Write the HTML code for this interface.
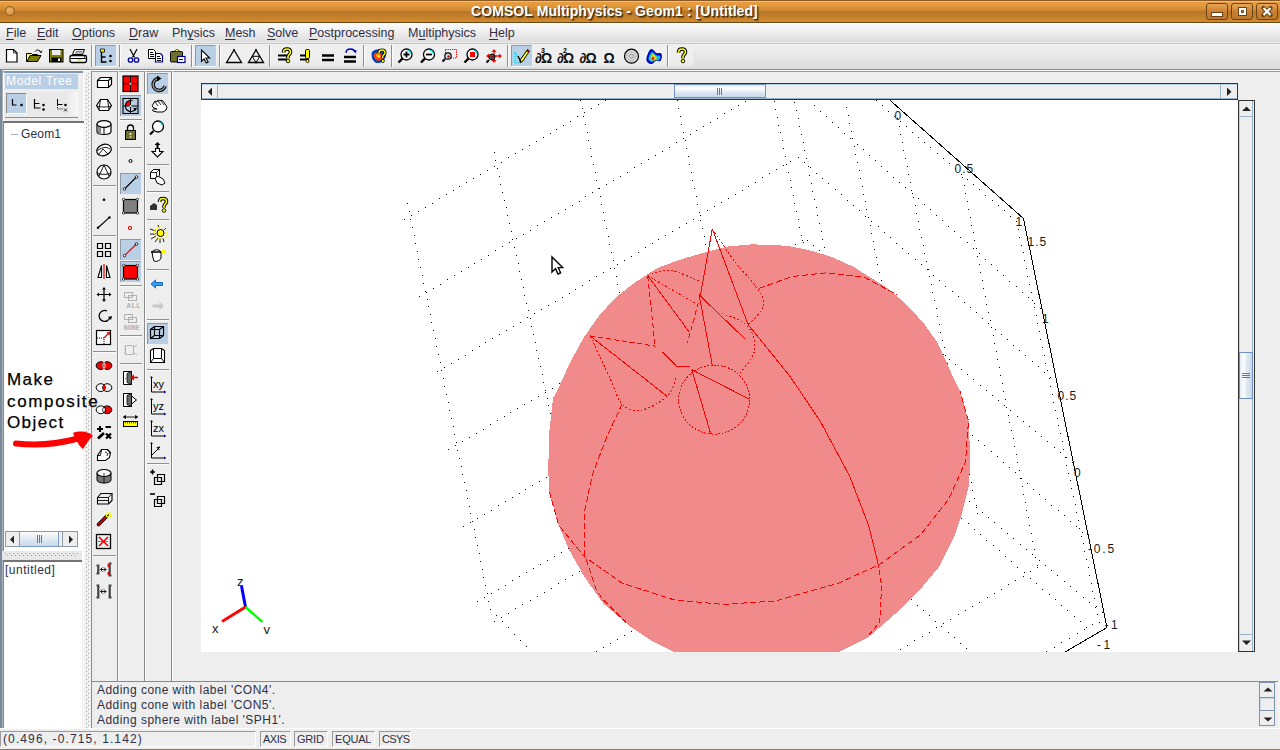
<!DOCTYPE html>
<html><head><meta charset="utf-8">
<style>
*{margin:0;padding:0;box-sizing:border-box}
html,body{width:1280px;height:750px;overflow:hidden;background:#eeeeee;font-family:"Liberation Sans",sans-serif;color:#222}
.a{position:absolute}
#title{left:0;top:0;width:1280px;height:23px;background:linear-gradient(#8a5a22 0,#8a5a22 1px,#f6c27e 1px,#f0b468 2px,#e89c3c 2px,#e49a3c 5px,#d48c34 9px,#c88430 11px,#b77728 11px,#bc7a2a 14px,#c8822a 18px,#d48a2c 22px,#6a4818 22px,#6a4818 23px)}
#title .t{left:471px;top:3px;font:bold 14px "Liberation Sans",sans-serif;color:#fff;letter-spacing:0.08px;text-shadow:1px 1px 0 #4a3010, 1.5px 1.5px 1px rgba(60,40,10,.6);white-space:nowrap}
.wb{top:3px;width:22px;height:17px;border:1px solid #6a4418;border-radius:3px;background:linear-gradient(#eaa756,#c98031 50%,#bd772a)}
#menu{left:0;top:23px;width:1280px;height:20px;background:linear-gradient(#fdfdfd,#f4f4f4 30%,#e6e6e6 70%,#dcdcdc 95%,#ececec 95%)}
#menu span{position:absolute;top:3px;font-size:12.5px;color:#2e2e46;white-space:nowrap}
#menu u{text-decoration:underline;text-underline-offset:1.5px;text-decoration-thickness:1px}
#tb{left:0;top:43px;width:1280px;height:27px;background:linear-gradient(#f0f0f0,#e9e9e9 40%,#dcdcdc);border-bottom:1px solid #8a8a8a}
.sep{position:absolute;width:2px;border-left:1px solid #9a9a9a;border-right:1px solid #fff}
.sel{position:absolute;background:#b8cfe5;border-left:1px solid #8b99a6;border-top:1px solid #8b99a6;border-right:1px solid #fff;border-bottom:1px solid #fff}
svg{position:absolute;overflow:visible}
</style></head><body>

<!-- TITLE BAR -->
<div id="title" class="a">
  <div class="a" style="left:5px;top:6px;width:10px;height:10px;border-radius:50%;border:1px solid #8a5a22;background:radial-gradient(circle at 40% 35%,#f2b36a,#d08530)"></div>
  <div class="a t">COMSOL Multiphysics - Geom1 : [Untitled]</div>
  <div class="a wb" style="left:1206px"><div class="a" style="left:5px;top:9px;width:10px;height:3px;background:#fff;outline:1px solid #6a4418"></div></div>
  <div class="a wb" style="left:1231px"><div class="a" style="left:6.5px;top:3.5px;width:7px;height:7px;border:2px solid #fff;outline:1px solid #6a4418;background:#8a5a22"></div></div>
  <div class="a wb" style="left:1256px"><svg width="22" height="17" style="left:-1px;top:-1px"><path d="M7.5 5 L14.5 12 M14.5 5 L7.5 12" stroke="#6a4418" stroke-width="4.2" stroke-linecap="round"/><path d="M7.5 5 L14.5 12 M14.5 5 L7.5 12" stroke="#fff" stroke-width="2.2"/></svg></div>
</div>

<!-- MENU -->
<div id="menu" class="a">
  <span style="left:6px"><u>F</u>ile</span>
  <span style="left:37px"><u>E</u>dit</span>
  <span style="left:72px"><u>O</u>ptions</span>
  <span style="left:129px"><u>D</u>raw</span>
  <span style="left:172px">Ph<u>y</u>sics</span>
  <span style="left:225px"><u>M</u>esh</span>
  <span style="left:267px"><u>S</u>olve</span>
  <span style="left:309px"><u>P</u>ostprocessing</span>
  <span style="left:408px">M<u>u</u>ltiphysics</span>
  <span style="left:489px"><u>H</u>elp</span>
</div>

<!-- TOOLBAR -->
<div id="tb" class="a"></div><div class="a" style="left:0;top:44px;width:693px;height:23px;background:linear-gradient(#efefef 70%,#e6e6e6)"></div><div class="a" style="left:0;top:43px;width:1280px;height:1px;background:#c8c8c8"></div>
<!--TOOLBAR_ICONS--><svg width="1280" height="72" style="left:0;top:0"><line x1="91.5" y1="45" x2="91.5" y2="67" stroke="#8f8f8f" stroke-width="1"/><line x1="92.5" y1="45" x2="92.5" y2="67" stroke="#fafafa" stroke-width="1"/>
<line x1="119.5" y1="45" x2="119.5" y2="67" stroke="#8f8f8f" stroke-width="1"/><line x1="120.5" y1="45" x2="120.5" y2="67" stroke="#fafafa" stroke-width="1"/>
<line x1="191.5" y1="45" x2="191.5" y2="67" stroke="#8f8f8f" stroke-width="1"/><line x1="192.5" y1="45" x2="192.5" y2="67" stroke="#fafafa" stroke-width="1"/>
<line x1="219.5" y1="45" x2="219.5" y2="67" stroke="#8f8f8f" stroke-width="1"/><line x1="220.5" y1="45" x2="220.5" y2="67" stroke="#fafafa" stroke-width="1"/>
<line x1="269.5" y1="45" x2="269.5" y2="67" stroke="#8f8f8f" stroke-width="1"/><line x1="270.5" y1="45" x2="270.5" y2="67" stroke="#fafafa" stroke-width="1"/>
<line x1="363.5" y1="45" x2="363.5" y2="67" stroke="#8f8f8f" stroke-width="1"/><line x1="364.5" y1="45" x2="364.5" y2="67" stroke="#fafafa" stroke-width="1"/>
<line x1="391.5" y1="45" x2="391.5" y2="67" stroke="#8f8f8f" stroke-width="1"/><line x1="392.5" y1="45" x2="392.5" y2="67" stroke="#fafafa" stroke-width="1"/>
<line x1="507.5" y1="45" x2="507.5" y2="67" stroke="#8f8f8f" stroke-width="1"/><line x1="508.5" y1="45" x2="508.5" y2="67" stroke="#fafafa" stroke-width="1"/>
<line x1="667.5" y1="45" x2="667.5" y2="67" stroke="#8f8f8f" stroke-width="1"/><line x1="668.5" y1="45" x2="668.5" y2="67" stroke="#fafafa" stroke-width="1"/>
<rect x="95" y="45.5" width="21" height="21" fill="#b8cfe5"/><path d="M95.5 66.5V45.5H115.5" stroke="#8e98a2" fill="none"/><path d="M95 66.5H116" stroke="#f4f7fa" fill="none"/>
<rect x="195" y="45.5" width="21" height="21" fill="#b8cfe5"/><path d="M195.5 66.5V45.5H215.5" stroke="#8e98a2" fill="none"/><path d="M195 66.5H216" stroke="#f4f7fa" fill="none"/>
<rect x="511" y="45.5" width="21" height="21" fill="#b8cfe5"/><path d="M511.5 66.5V45.5H531.5" stroke="#8e98a2" fill="none"/><path d="M511 66.5H532" stroke="#f4f7fa" fill="none"/>
<path d="M6.5 49.5h7l3.5 3.5v9h-10.5z" fill="#fff" stroke="#000" stroke-width="1.2"/><path d="M13.5 49.5v3.5h3.5" fill="none" stroke="#000" stroke-width=".8"/>
<path d="M26.5 53.5h5l1 1h5v7h-11z" fill="#ffff80" stroke="#000"/><path d="M27 61.5l3-6h11l-3.5 6z" fill="#808000" stroke="#000"/><path d="M35 51.5c1.5-2 4.5-2 5.5 0.5" fill="none" stroke="#000"/><path d="M39.5 50.5l1.5 2.5 1-2.5" fill="none" stroke="#000" stroke-width=".8"/>
<rect x="49.5" y="49.5" width="13.5" height="12.5" fill="#808000" stroke="#000"/><rect x="52" y="50" width="8.5" height="5" fill="#ececec"/><rect x="51.5" y="57.5" width="10" height="4.5" fill="#000"/><rect x="58" y="58.5" width="2" height="2.5" fill="#fff"/>
<path d="M74.5 49.5h10l-2 5h-10z" fill="#fff" stroke="#000" stroke-width="1"/><path d="M75.5 51.3h7M75 53h7" stroke="#000" stroke-width=".6"/><path d="M72 55.5h13c1 0 1.5 .8 1.5 1.8v3.2c0 1-.8 2-2 2h-12.5c-1.2 0-2-1-2-2v-3.2c0-1 .8-1.8 2-1.8z" fill="#fff" stroke="#000" stroke-width="1.3"/><path d="M71 58.5h15" stroke="#000" stroke-width="1"/><path d="M77.5 59.8h4" stroke="#e8d800" stroke-width="1.4"/><circle cx="84.5" cy="57" r=".7" fill="#000"/>
<path d="M101.5 51v11h5M101.5 57h4" stroke="#000" stroke-width="1.4" fill="none"/><path d="M100.5 49h4v3h-4z" fill="#ffff00" stroke="#000" stroke-width=".8"/><circle cx="110.5" cy="56" r="1.3"/><circle cx="110.5" cy="61" r="1.3"/>
<path d="M130 49l4.5 8.5M137 49l-4.5 8.5" stroke="#000" stroke-width="1.2"/><circle cx="130.5" cy="60" r="2.2" fill="none" stroke="#0000a0" stroke-width="1.3"/><circle cx="136.5" cy="60" r="2.2" fill="none" stroke="#0000a0" stroke-width="1.3"/>
<path d="M148.5 49.5h5l2 2v7h-7z" fill="#fff" stroke="#000"/><path d="M150 52.5h3M150 54.5h4M150 56.5h4" stroke="#000" stroke-width="1" shape-rendering="crispEdges"/><path d="M155.5 53.5h5l2 2v6.5h-7z" fill="#fff" stroke="#00008a" stroke-width="1.2"/><path d="M157 56.5h3M157 58.5h4M157 60.5h4" stroke="#000" stroke-width="1" shape-rendering="crispEdges"/>
<rect x="170.5" y="51.5" width="12" height="10.5" rx="1" fill="#6f6f30" stroke="#000"/><path d="M174 51.5l2.5-2h1l2.5 2z" fill="#ffff30" stroke="#000" stroke-width=".7"/><rect x="177.5" y="56.5" width="7.5" height="6" fill="#fff" stroke="#00008a" stroke-width="1.2"/><path d="M179 59.5h3.5" stroke="#00008a" stroke-width="1" shape-rendering="crispEdges"/>
<path d="M201.5 50v11.5l2.6-2.6 2.2 4 1.8-0.9-2.1-4h3.7z" fill="#fff" stroke="#000" stroke-width="1.1"/>
<path d="M234 50l-7.5 12.5h15z" fill="none" stroke="#000" stroke-width="1.3"/><circle cx="234" cy="50" r="1"/>
<path d="M256 50l-7.5 12.5h15z" fill="none" stroke="#000" stroke-width="1.3"/><path d="M252.2 56.3h7.6l-3.8 6.2z" fill="none" stroke="#000" stroke-width="1"/><circle cx="256" cy="50" r="1"/><circle cx="256" cy="62.5" r="1"/>
<path d="M278 55.5h9M278 59.5h9" stroke="#000" stroke-width="2.2"/><path d="M283.5 52.5c0-2.5 1.5-3.5 3.5-3.5s3.5 1 3.5 3.2c0 2-2.5 2.5-2.5 4.5v1.5" fill="none" stroke="#000" stroke-width="3.6"/><path d="M283.5 52.5c0-2.5 1.5-3.5 3.5-3.5s3.5 1 3.5 3.2c0 2-2.5 2.5-2.5 4.5v1.5" fill="none" stroke="#ffff00" stroke-width="1.6"/><circle cx="288" cy="61" r="1.8" fill="#ffff00" stroke="#000" stroke-width=".9"/>
<path d="M300 55.5h9M300 59.5h9" stroke="#000" stroke-width="2.2"/><rect x="305.5" y="49.5" width="4" height="9" rx="1.2" fill="#ffff00" stroke="#000"/><circle cx="307.5" cy="61" r="1.6" fill="#ffff00" stroke="#000" stroke-width=".8"/>
<path d="M322 55.5h12M322 60h12" stroke="#000" stroke-width="2.4"/>
<path d="M344 57h12M344 61.5h12" stroke="#000" stroke-width="2.4"/><path d="M346 53c0-3 2-4 4.5-4s4 1.5 4.5 3" fill="none" stroke="#0000c0" stroke-width="1.3"/><path d="M353 50.5l3 3 0.5-3.5z" fill="#0000c0"/>
<path d="M372 52c2-3 9-4 12-1s2 6 0 9-5 3-7 3-3-2-4-3-2-5-1-8z" fill="#0040c0"/><path d="M374 54c2-2 6-2 8 0s1 5-1 6-4 1-5 0-3-4-2-6z" fill="#ff4000"/><path d="M376 55c1-1 3-1 4 0s0 3-1 3-3-2-3-3z" fill="#ffe000"/><path d="M379 53c0-2 1.2-3 3-3s3 1 3 2.8c0 1.8-2.2 2.2-2.2 4v1.2" fill="none" stroke="#000" stroke-width="3.2"/><path d="M379 53c0-2 1.2-3 3-3s3 1 3 2.8c0 1.8-2.2 2.2-2.2 4v1.2" fill="none" stroke="#ffff00" stroke-width="1.4"/><circle cx="382.8" cy="61" r="1.6" fill="#ffff00" stroke="#000" stroke-width=".8"/>
<path d="M403.0 58.0l-4.5 4.5" stroke="#000" stroke-width="2.4"/><circle cx="406.5" cy="54.5" r="5.5" fill="#fff" stroke="#000" stroke-width="1.3"/><path d="M407.5 50.2a4.5 4.5 0 0 1 3.3 3.3" stroke="#00e0f0" fill="none" stroke-width="1.2"/><path d="M403.5 54.5h6M406.5 51.5v6" stroke="#000" stroke-width="1.8"/>
<path d="M425.5 58.0l-4.5 4.5" stroke="#000" stroke-width="2.4"/><circle cx="429" cy="54.5" r="5.5" fill="#fff" stroke="#000" stroke-width="1.3"/><path d="M430 50.2a4.5 4.5 0 0 1 3.3 3.3" stroke="#00e0f0" fill="none" stroke-width="1.2"/><path d="M426 54.5h6" stroke="#000" stroke-width="1.8"/>
<rect x="445.5" y="49.5" width="11" height="8.5" fill="none" stroke="#e00000" stroke-width="1" stroke-dasharray="1.2 1"/>
<path d="M445 59l-2.5 2.5" stroke="#000" stroke-width="2.2"/><circle cx="448" cy="56" r="3.2" fill="#e0e0e0" stroke="#000" stroke-width="1.2"/><circle cx="448.5" cy="56.5" r="1.2" fill="#c00000"/>
<path d="M469.0 58.0l-4.5 4.5" stroke="#000" stroke-width="2.4"/><circle cx="472.5" cy="54.5" r="5.5" fill="#fff" stroke="#000" stroke-width="1.3"/><path d="M473.5 50.2a4.5 4.5 0 0 1 3.3 3.3" stroke="#00e0f0" fill="none" stroke-width="1.2"/><rect x="470" y="52" width="5" height="5" fill="#ff0000"/>
<path d="M494 49l-2.5 3h5zM494 63l-2.5-3h5zM486 56l3-2.5v5zM502 56l-3-2.5v5z" fill="#ff0000"/><path d="M494 51v10M488 56h12" stroke="#ff0000" stroke-width="1.3"/><path d="M489 60l-2.5 2.5" stroke="#000" stroke-width="2"/><circle cx="492" cy="57" r="3" fill="#555" stroke="#000"/><circle cx="492.5" cy="57" r="1.2" fill="#a00000"/>
<path d="M515 52v11h6z" fill="none" stroke="#00d0e0" stroke-width="1.2" stroke-dasharray="1 1"/><path d="M527.5 49.5l2 1.5-7 10.5-2.5 1 0.3-2.7z" fill="#ffff00" stroke="#000" stroke-width="1"/><path d="M527.5 49.5l2 1.5-1.2 1.8-2-1.5z" fill="#a00000"/><path d="M518 56l3 6" stroke="#000" stroke-width="1.2"/>
<text x="535" y="62.8" font-family="Liberation Sans" font-size="14" font-weight="bold" fill="#111" letter-spacing="-0.8">∂Ω</text><text x="541" y="52.5" font-family="Liberation Sans" font-size="7" font-weight="bold">3</text>
<text x="557" y="62.8" font-family="Liberation Sans" font-size="14" font-weight="bold" fill="#111" letter-spacing="-0.8">∂Ω</text><text x="563" y="52.5" font-family="Liberation Sans" font-size="7" font-weight="bold">2</text>
<text x="579.5" y="62.8" font-family="Liberation Sans" font-size="14" font-weight="bold" fill="#111" letter-spacing="-0.8">∂Ω</text>
<text x="603.5" y="62.8" font-family="Liberation Sans" font-size="14" font-weight="bold" fill="#111">Ω</text>
<circle cx="631.5" cy="56.2" r="7" fill="#d8d8d8" stroke="#000" stroke-width="1.2"/><circle cx="631.5" cy="56.2" r="4.5" fill="none" stroke="#888" stroke-width=".8" stroke-dasharray="1 1"/><circle cx="631.5" cy="56.2" r="2" fill="none" stroke="#888" stroke-width=".8"/>
<path d="M646.5 58c1-4 3-9 5-9 2 0 3 3 5 4s4-1 5 1 0 6-1 7-3-1-5 0-2 3-4 3-6-2-5-6z" fill="#0000c0"/><path d="M648.5 58c1-3 2-6 3.5-6s2.5 2 4 3 3 0 4 1 0 3-1 4-2 0-3.5 0-2 2-3 2-4.5-1-4-4z" fill="#00c0e0"/><path d="M650.5 58c0.5-2 1.5-4 2.5-4s2 2 3 2.5 1 2 0 3-1.5 1-2.5 1-3.5-1-3-2.5z" fill="#ffd000"/><path d="M651.5 58.5c0.5-1 1-2 1.5-2s1.5 1.5 1.5 2-1 1.5-1.5 1.5-1.5-.5-1.5-1.5z" fill="#e02000"/>
<path d="M678.5 52.5c0-2.5 1.5-3.5 3.5-3.5s3.5 1 3.5 3.2c0 2-2.5 2.5-2.5 4.5v1.5" fill="none" stroke="#000" stroke-width="3.6"/><path d="M678.5 52.5c0-2.5 1.5-3.5 3.5-3.5s3.5 1 3.5 3.2c0 2-2.5 2.5-2.5 4.5v1.5" fill="none" stroke="#ffff00" stroke-width="1.6"/><circle cx="683" cy="61" r="1.8" fill="#ffff00" stroke="#000" stroke-width=".9"/></svg><!--/TOOLBAR_ICONS-->

<!-- LEFT PANEL -->
<div class="a" style="left:0;top:70px;width:1280px;height:1px;background:#fbfbfb"></div><div class="a" style="left:91px;top:71px;width:1189px;height:1px;background:#8c9db0"></div>

<div class="a" style="left:0;top:70px;width:2px;height:659px;background:#7b8b9b"></div><div class="a" style="left:2px;top:70px;width:1px;height:659px;background:#a8b2bc"></div>
<div class="a" style="left:3px;top:71px;width:80px;height:52px;background:#eeeeee;border-top:2px solid #8096ac;border-left:1px solid #fff"></div>
<div class="a" style="left:5px;top:74px;width:73px;height:15px;background:#b8cfe5"></div>
<div class="a" style="left:6px;top:74px;font-size:12px;letter-spacing:0.65px;color:#fff;white-space:nowrap">Model Tree</div>
<div class="a" style="left:5px;top:92px;width:73px;height:23px;background:linear-gradient(90deg,#e9e9e9 85%,#f8f8f8)"></div>
<div class="sel" style="left:6px;top:93px;width:21px;height:21px;border-left-color:#888;border-top-color:#888"></div>
<div class="a" style="left:5px;top:117px;width:73px;height:1px;background:#8a8a8a"></div>
<svg width="80" height="30" style="left:0;top:90px">
 <path d="M12.5 9v6h4" stroke="#000" fill="none" stroke-width="1.2"/><circle cx="21.5" cy="15" r="1.3"/>
 <path d="M34.5 9v9h6M34.5 13.5h5" stroke="#000" fill="none" stroke-width="1.2"/><circle cx="43.5" cy="15" r="1.3"/><circle cx="43.5" cy="19.5" r="1.3"/>
 <path d="M57.5 9v5.5h5" stroke="#000" fill="none" stroke-width="1"/><path d="M57.5 15v4h5" stroke="#000" fill="none" stroke-width="1" stroke-dasharray="1 1"/><circle cx="65.5" cy="15" r="1.3"/><path d="M64 18.5l3 3M67 18.5l-3 3" stroke="#000" stroke-width=".8"/>
</svg>
<div class="a" style="left:83px;top:73px;width:1px;height:656px;background:#fbfbfb"></div><div class="a" style="left:84px;top:71px;width:7px;height:658px;background:#f2f2f2"></div><div class="a" style="left:3px;top:121px;width:81px;height:439px;background:#fff;border-left:1px solid #888;border-top:2px solid #747474"></div>
<div class="a" style="left:11px;top:134px;width:7px;height:1px;background:#9fb3c8"></div>
<div class="a" style="left:21px;top:127px;font-size:12px;color:#2e2e46;white-space:nowrap;letter-spacing:0.15px">Geom1</div>
<!-- h scrollbar -->
<div class="a" style="left:5px;top:531px;width:73px;height:16px;background:#eeeeee;border:1px solid #8c9aa8"></div>
<div class="a" style="left:19px;top:531px;width:40px;height:16px;background:linear-gradient(#fdfdfd,#dce6f0 60%,#c9d8e8);border:1px solid #7c9ccc;border-radius:1px"></div>
<div class="a" style="left:37px;top:535px;width:5px;height:8px;border-left:1px solid #5a7ab0;border-right:1px solid #5a7ab0"><div class="a" style="left:1px;top:0;width:1px;height:8px;background:#5a7ab0"></div></div>
<div class="a" style="left:62px;top:532px;width:1px;height:14px;background:#8c9aa8"></div>
<svg width="80" height="20" style="left:0;top:530px"><path d="M10 9.5l4-4v8z M73 9.5l-4-4v8z" fill="#222"/></svg>
<div class="a" style="left:2px;top:551px;width:80px;height:9px;background:#e8e8e8"></div><svg width="90" height="12" style="left:0;top:550px"><defs><pattern id="gp2" width="4" height="4" patternUnits="userSpaceOnUse" x="1" y="0"><rect x="0" y="3" width="1" height="1" fill="#8ea0b4"/><rect x="2" y="5" width="1" height="1" fill="#8ea0b4"/><rect x="2" y="1" width="1" height="1" fill="#8ea0b4"/></pattern></defs><rect x="5" y="3" width="74" height="4" fill="url(#gp2)"/></svg>
<div class="a" style="left:3px;top:560px;width:79px;height:169px;background:#fff;border-top:2px solid #747474;border-left:1px solid #888"></div>
<div class="a" style="left:5px;top:563px;font-size:12px;letter-spacing:0.5px;color:#2e2e46;white-space:nowrap">[untitled]</div>
<!-- grip -->
<svg width="8" height="660" style="left:84px;top:70px"><defs><pattern id="gp" width="4" height="4" patternUnits="userSpaceOnUse" x="0" y="1"><rect x="2" y="0" width="1" height="1" fill="#8ea0b4"/><rect x="4" y="2" width="1" height="1" fill="#8ea0b4"/><rect x="0" y="2" width="1" height="1" fill="#8ea0b4"/></pattern></defs><rect x="2" y="3" width="4" height="655" fill="url(#gp)"/></svg>
<!-- annotation -->
<div class="a" style="left:7px;top:369px;font-size:17px;line-height:21.7px;color:#000;white-space:nowrap;z-index:5;-webkit-text-stroke:0.25px #000">
<div style="letter-spacing:1.45px">Make</div><div style="letter-spacing:1.65px">composite</div><div style="letter-spacing:1.4px">Object</div></div>
<svg width="100" height="30" style="left:0;top:425px;z-index:5"><path d="M16 18.5 C30 20, 50 21, 76 14" stroke="#ff0000" stroke-width="6" fill="none" stroke-linecap="round"/><path d="M73 8 C80 5, 90 7, 93 11 C88 15, 86 20, 83 24 C80 22, 76 16, 73 8z" fill="#ff0000"/></svg>


<!-- VERTICAL TOOLBARS -->
<!--VTB--><svg width="200" height="620" style="left:0;top:0"><path d="M93 185.5H116" stroke="#8f8f8f"/><path d="M93 186.5H116" stroke="#fafafa"/>
<path d="M93 235.5H116" stroke="#8f8f8f"/><path d="M93 236.5H116" stroke="#fafafa"/>
<path d="M93 351.5H116" stroke="#8f8f8f"/><path d="M93 352.5H116" stroke="#fafafa"/>
<path d="M93 555.5H116" stroke="#8f8f8f"/><path d="M93 556.5H116" stroke="#fafafa"/>
<path d="M120 119.5H142" stroke="#8f8f8f"/><path d="M120 120.5H142" stroke="#fafafa"/>
<path d="M120 147.5H142" stroke="#8f8f8f"/><path d="M120 148.5H142" stroke="#fafafa"/>
<path d="M120 285.5H142" stroke="#8f8f8f"/><path d="M120 286.5H142" stroke="#fafafa"/>
<path d="M120 335.5H142" stroke="#8f8f8f"/><path d="M120 336.5H142" stroke="#fafafa"/>
<path d="M120 363.5H142" stroke="#8f8f8f"/><path d="M120 364.5H142" stroke="#fafafa"/>
<path d="M147 164.5H169" stroke="#8f8f8f"/><path d="M147 165.5H169" stroke="#fafafa"/>
<path d="M147 191.5H169" stroke="#8f8f8f"/><path d="M147 192.5H169" stroke="#fafafa"/>
<path d="M147 219.5H169" stroke="#8f8f8f"/><path d="M147 220.5H169" stroke="#fafafa"/>
<path d="M147 269.5H169" stroke="#8f8f8f"/><path d="M147 270.5H169" stroke="#fafafa"/>
<path d="M147 319.5H169" stroke="#8f8f8f"/><path d="M147 320.5H169" stroke="#fafafa"/>
<path d="M147 369.5H169" stroke="#8f8f8f"/><path d="M147 370.5H169" stroke="#fafafa"/>
<path d="M147 463.5H169" stroke="#8f8f8f"/><path d="M147 464.5H169" stroke="#fafafa"/>
<rect x="120" y="95" width="21" height="21" fill="#b8cfe5"/><path d="M120.5 116V95.5H141" stroke="#8e98a2" fill="none"/>
<rect x="120" y="173" width="21" height="21" fill="#b8cfe5"/><path d="M120.5 194V173.5H141" stroke="#8e98a2" fill="none"/>
<rect x="120" y="239" width="21" height="21" fill="#b8cfe5"/><path d="M120.5 260V239.5H141" stroke="#8e98a2" fill="none"/>
<rect x="120" y="261" width="21" height="21" fill="#b8cfe5"/><path d="M120.5 282V261.5H141" stroke="#8e98a2" fill="none"/>
<rect x="147" y="73" width="21" height="21" fill="#b8cfe5"/><path d="M147.5 94V73.5H168" stroke="#8e98a2" fill="none"/>
<rect x="147" y="323" width="21" height="21" fill="#b8cfe5"/><path d="M147.5 344V323.5H168" stroke="#8e98a2" fill="none"/>
<path d="M97.5 80.5l3-3h11v7l-3 3h-11z" fill="#fff" stroke="#000" stroke-width="1.2"/><path d="M97.5 80.5h11v7M108.5 80.5l3-3" stroke="#000" stroke-width="1.1" fill="none"/>
<path d="M100.5 99.5h7l4 6-3 5h-9l-3-5z" fill="#fff" stroke="#000" stroke-width="1.1"/><path d="M100.5 99.5l-1.5 10M107.5 99.5l1.5 10M96.5 105.5c2 2 13 2 15 0" stroke="#000" stroke-width=".9" fill="none"/>
<path d="M97 124v7.5c0 4 14 4 14 0v-7.5" fill="#fff" stroke="#000" stroke-width="1.2"/><path d="M97.6 125.5c0.5 1.5 2 2.3 3.5 2.6v6.3c-1.5-.3-3-1-3.5-2.5z" fill="#8a8a8a"/><ellipse cx="104" cy="124" rx="7" ry="3.3" fill="#fff" stroke="#000" stroke-width="1.2"/><path d="M104 127.3v7.8" stroke="#000" stroke-width="1" fill="none"/>
<ellipse cx="104" cy="150" rx="7.5" ry="5.5" transform="rotate(-20 104 150)" fill="#fff" stroke="#000" stroke-width="1.2"/><path d="M97 151c3-3 9-5 13-2M99 154l4-5 5 5" stroke="#000" stroke-width=".9" fill="none"/>
<circle cx="104" cy="172" r="7" fill="#fff" stroke="#000" stroke-width="1.2"/><path d="M97 172.5c3 2.5 11 2.5 14 0M104 165l-5 11M104 165l5 11" stroke="#000" stroke-width=".9" fill="none"/>
<circle cx="104" cy="199.8" r="1.3" fill="#000"/>
<path d="M98 227.7L109.5 217.4" stroke="#000" stroke-width="1.2"/><circle cx="98" cy="227.7" r="1.2"/><circle cx="109.5" cy="217.4" r="1.2"/>
<path d="M97.5 243.5h5v5h-5zM105.5 243.5h5v5h-5zM97.5 251.5h5v5h-5zM105.5 251.5h5v5h-5z" stroke="#000" stroke-width="1.2" fill="none"/>
<path d="M98 277.5l3.5-12v12zM110 277.5l-3.5-12v12z" fill="#fff" stroke="#000" stroke-width="1.1"/><path d="M104 264v15" stroke="#e00000" stroke-width="1.2"/>
<path d="M104 288v13M97.5 294.5h13" stroke="#000" stroke-width="1.2"/><path d="M104 287l-2 2.5h4zM104 302l-2-2.5h4zM96.5 294.5l2.5-2v4zM111.5 294.5l-2.5-2v4z" fill="#000"/>
<path d="M107 311a5.5 5.5 0 1 0 3 6" stroke="#000" stroke-width="1.3" fill="none"/><path d="M108 317l3 3 1-4z" fill="#000"/>
<rect x="96.5" y="330.5" width="14" height="14" fill="#fff" stroke="#000" stroke-width="1.2"/><path d="M97 338h7v6.5" stroke="#000" stroke-dasharray="1 1" fill="none"/><path d="M104 338l5.5-5.5" stroke="#e00000" stroke-width="1.2"/><path d="M110 332l-3.5 0.3 3.2 3.2z" fill="#e00000"/>
<ellipse cx="100.8" cy="365.6" rx="4.6" ry="3.9" fill="#f00000" stroke="#000" stroke-width="1"/><ellipse cx="107.2" cy="365.6" rx="4.6" ry="3.9" fill="#f00000" stroke="#000" stroke-width="1"/><path d="M104 362.5c-1.6 2-1.6 4.2 0 6.2c1.6-2 1.6-4.2 0-6.2z" fill="#f00000" stroke="#fff" stroke-width=".9"/>
<ellipse cx="100.8" cy="387.6" rx="4.6" ry="3.9" fill="#fff" stroke="#000" stroke-width="1"/><ellipse cx="107.2" cy="387.6" rx="4.6" ry="3.9" fill="none" stroke="#000" stroke-width="1"/><path d="M104 384.3c-1.8 2-1.8 4.6 0 6.6c1.8-2 1.8-4.6 0-6.6z" fill="#f00000"/>
<ellipse cx="107.2" cy="409.8" rx="4.6" ry="3.9" fill="#f00000" stroke="#000" stroke-width="1"/><ellipse cx="100.8" cy="409.8" rx="4.6" ry="3.9" fill="#fff" stroke="#000" stroke-width="1"/><path d="M104 406.5c-1.8 2-1.8 4.6 0 6.6" fill="none" stroke="#000" stroke-width=".8"/>
<path d="M97 429h6M100 426v6M105.5 427h5.5" stroke="#000" stroke-width="2"/><path d="M98 438.5l6-5.5" stroke="#000" stroke-width="2.8"/><path d="M106 433.5l5 5M111 433.5l-5 5" stroke="#000" stroke-width="2.2"/>
<path d="M97.5 455.5l4-6h6l3 3-1 5-4 3h-8z" fill="#fff" stroke="#000" stroke-width="1.1"/><path d="M101.5 449.5l-1 6h-3M105 452c2 0 3 2 2 4M107 450c2 0 3 2 2 4" stroke="#000" stroke-width=".9" fill="none"/>
<path d="M97 473v7c0 4 14 4 14 0v-7" fill="#777" stroke="#000" stroke-width="1"/><ellipse cx="104" cy="473" rx="7" ry="3.5" fill="#fff" stroke="#000" stroke-width="1.1"/><path d="M104 473v10.5" stroke="#000" stroke-width=".8"/>
<path d="M97.5 497.5l3.5-4h11v7l-3.5 3.5h-11z" fill="none" stroke="#000" stroke-width="1.1"/><path d="M97.5 497.5h11v6.5M108.5 497.5l3.5-4M97.5 500.5h11" stroke="#000" stroke-width=".9" fill="none"/>
<path d="M98.5 524.5l8-8" stroke="#000" stroke-width="3.6" stroke-linecap="round"/><path d="M98.5 524.5l8-8" stroke="#d00000" stroke-width="2" stroke-linecap="round"/><circle cx="108.5" cy="515" r="2.2" fill="none" stroke="#ffff00" stroke-width="1.2"/><circle cx="108.5" cy="515" r=".7" fill="#000"/>
<rect x="96.5" y="534.5" width="14" height="14" fill="#eee" stroke="#000" stroke-width="1.3"/><path d="M98.5 541.5h10" stroke="#000" stroke-dasharray="1 1"/><path d="M99 537l9 9M108 537l-9 9" stroke="#e00000" stroke-width="1.5"/>
<path d="M96.5 565.5h1.8v8h-1.8M111.5 563.5h-1.8v12h1.8" stroke="#444" stroke-width="2.2" fill="none"/><path d="M100.5 569.5h5.5M100.5 569.5l2-2M100.5 569.5l2 2M106 569.5l-2-2M106 569.5l-2 2" stroke="#000" stroke-width=".9" fill="none"/><circle cx="108.3" cy="565.5" r="1" fill="#f00"/><circle cx="108.3" cy="573.5" r="1" fill="#f00"/><path d="M108.3 563.5v4M108.3 571.5v4" stroke="#f00" stroke-width=".8"/>
<path d="M96.5 585.5h1.8v12h-1.8M111.5 585.5h-1.8v12h1.8" stroke="#444" stroke-width="2.2" fill="none"/><path d="M100.5 591.5h5.5M100.5 591.5l2-2M100.5 591.5l2 2M106 591.5l-2-2M106 591.5l-2 2" stroke="#000" stroke-width=".9" fill="none"/>
<rect x="123" y="76" width="15" height="15.5" fill="#ff0000" stroke="#000" stroke-width="1.2"/><path d="M130.5 76v15.5M123 83.7h15" stroke="#000" stroke-width="1"/><circle cx="130.5" cy="83.7" r="1" fill="#fff"/>
<rect x="123" y="98.5" width="15" height="15" fill="#b8cfe5" stroke="#000" stroke-width="1.1"/><path d="M130.5 106v-5.5a5.5 5.5 0 0 0-5.5 5.5z" fill="#f00"/><path d="M123.5 99h7v7h-7z" fill="none"/><path d="M130.5 98.5v15M123 106h15" stroke="#000" stroke-width="1"/><path d="M132.5 100.8a5.5 5.5 0 1 0 3.3 7.5" stroke="#000" fill="none" stroke-width="1.1"/><path d="M137 107.5l-1.2 3.5-2.8-2.5z" fill="#000"/><circle cx="130.5" cy="106" r="1" fill="#fff"/>
<path d="M127.5 131v-3a3 3 0 0 1 6 0v3" stroke="#000" stroke-width="1.3" fill="none"/><rect x="125.5" y="130.5" width="10" height="9" fill="#6f6f30" stroke="#000"/><circle cx="130.5" cy="134" r="1" fill="#fff"/><path d="M129.5 137h2" stroke="#fff"/>
<circle cx="130.5" cy="161" r="1.5" fill="none" stroke="#000" stroke-width="1"/>
<path d="M124.5 189L136.5 177" stroke="#000" stroke-width="1.1"/><circle cx="124.5" cy="189" r="1.3" fill="#fff" stroke="#000" stroke-width=".8"/><circle cx="136.5" cy="177" r="1.3" fill="#fff" stroke="#000" stroke-width=".8"/>
<rect x="123.5" y="199.5" width="14" height="13.5" fill="#808080" stroke="#000" stroke-width="1.2"/><circle cx="123.5" cy="199.5" r="1.2" fill="#fff" stroke="#000" stroke-width=".7"/><circle cx="137.5" cy="199.5" r="1.2" fill="#fff" stroke="#000" stroke-width=".7"/><circle cx="123.5" cy="213" r="1.2" fill="#fff" stroke="#000" stroke-width=".7"/><circle cx="137.5" cy="213" r="1.2" fill="#fff" stroke="#000" stroke-width=".7"/>
<circle cx="130" cy="228.1" r="1.6" fill="none" stroke="#e00000" stroke-width="1.1"/>
<path d="M124.5 255.6L136.5 244" stroke="#e00000" stroke-width="1.1"/><circle cx="124.5" cy="255.6" r="1.3" fill="#fff" stroke="#000" stroke-width=".8"/><circle cx="136.5" cy="244" r="1.3" fill="#fff" stroke="#000" stroke-width=".8"/>
<rect x="123.5" y="265.5" width="14" height="13.5" fill="#ff0000" stroke="#000" stroke-width="1.2"/><circle cx="123.5" cy="265.5" r="1.2" fill="#fff" stroke="#000" stroke-width=".7"/><circle cx="137.5" cy="265.5" r="1.2" fill="#fff" stroke="#000" stroke-width=".7"/><circle cx="123.5" cy="279" r="1.2" fill="#fff" stroke="#000" stroke-width=".7"/><circle cx="137.5" cy="279" r="1.2" fill="#fff" stroke="#000" stroke-width=".7"/>
<path d="M124.5 292.5h8v5h-8zM128.5 295.5h8v5h-8z" stroke="#b0b0b0" fill="none" shape-rendering="crispEdges"/><text x="126.5" y="307.5" font-size="7.5" font-family="Liberation Mono" font-weight="bold" fill="#b4b4b4" letter-spacing="0.3">ALL</text>
<path d="M124.5 314.5h8v5h-8zM128.5 317.5h8v5h-8z" stroke="#b0b0b0" fill="none" shape-rendering="crispEdges"/><text x="123.5" y="329.5" font-size="7" font-family="Liberation Mono" font-weight="bold" fill="#b4b4b4" letter-spacing="-0.2">NONE</text>
<path d="M125.5 345.5h8v9h-8z" stroke="#b4b4b4" fill="none"/><path d="M134 347l3-2M134 353l3 2" stroke="#b4b4b4"/><path d="M124 347h1.5M124 350h1.5M124 353h1.5" stroke="#b4b4b4"/>
<path d="M123.5 371.5h8v13h-8z" fill="#fff" stroke="#000"/><path d="M127 373.5l4.5-2v13l-4.5-2z" fill="#666" stroke="#000" stroke-width=".8"/><path d="M125 379l1 -1" stroke="#000" stroke-width=".6"/><path d="M131.5 377.5h6.5" stroke="#e00000" stroke-width="1.6"/><path d="M130.5 377.5l3.5-3.2v6.4z" fill="#e00000"/>
<path d="M123.5 393.5h8v13h-8z" fill="#fff" stroke="#000"/><path d="M127 395.5l4.5-2v13l-4.5-2z" fill="#666" stroke="#000" stroke-width=".8"/><path d="M131.5 396l5 4-5 4z" fill="#fff" stroke="#000"/>
<path d="M123.5 417h14M123.5 417l2-1.5v3zM137.5 417l-2-1.5v3z" stroke="#000" stroke-width=".9" fill="#000"/><rect x="123.5" y="421.5" width="14" height="5" fill="#ffff00" stroke="#000"/><path d="M125.5 422v1.5M127.5 422v1.5M129.5 422v1.5M131.5 422v1.5M133.5 422v1.5M135.5 422v1.5" stroke="#000" stroke-width=".6"/>
<path d="M158.5 78.5a6 6 0 1 0 6.5 7.5" stroke="#000" stroke-width="3.6" fill="none"/><path d="M158.5 78.5a6 6 0 1 0 6.5 7.5" stroke="#9a9a9a" stroke-width="1.6" fill="none"/><path d="M157 75.5l4.5 3-4.5 3z" fill="#000"/>
<path d="M152 106l3-5 2 1 1-2 2 1 1-1 2 1 4 6-1 3-3 2h-6l-4-1c-1-1 0-2 1-2h3l-3-1z" fill="#fff" stroke="#000" stroke-width="1"/><path d="M155 102l3 4M158 101l3 4M161 101l3 4" stroke="#000" stroke-width=".8"/>
<path d="M153.5 131l-3.5 3.5" stroke="#000" stroke-width="2.2"/><circle cx="158" cy="126.5" r="5.5" fill="#fff" stroke="#000" stroke-width="1.3"/><path d="M159 122a4.5 4.5 0 0 1 3.3 3.3" stroke="#00e0f0" fill="none" stroke-width="1.2"/>
<path d="M157.5 142l-3 3h2v3h2v-3h2z" fill="#000"/><path d="M155.5 148.5v3h-3.5l5.5 5.5 5.5-5.5h-3.5v-3z" fill="#fff" stroke="#000" stroke-width="1.1"/>
<path d="M150.5 172.5l3-3h6v6l-3 3h-6z" fill="#fff" stroke="#000"/><path d="M150.5 172.5h6v6M156.5 172.5l3-3" stroke="#000" fill="none" stroke-width=".8"/><path d="M155 178l3-2 5 3 2 4-3 2-5-2z" fill="#fff" stroke="#000"/>
<path d="M150 206l4-3 3 2v5h-7z" fill="#333"/><path d="M159.5 202c0-2.5 1.5-3.5 3.5-3.5s3.5 1 3.5 3.2c0 2-2.5 2.5-2.5 4.5v1.5" fill="none" stroke="#000" stroke-width="3.6"/><path d="M159.5 202c0-2.5 1.5-3.5 3.5-3.5s3.5 1 3.5 3.2c0 2-2.5 2.5-2.5 4.5v1.5" fill="none" stroke="#ffff00" stroke-width="1.6"/><circle cx="164" cy="210.5" r="1.8" fill="#ffff00" stroke="#000" stroke-width=".9"/>
<circle cx="160.5" cy="233" r="3.5" fill="#ffff00" stroke="#000"/><path d="M150 229l6 2M150 234h6M151 239l5-3M155 242l3-4M160 243v-5M164 242l-1-4M166 228l-2 2M158 225l1 3" stroke="#000" stroke-width=".9"/><circle cx="160.5" cy="233" r="6" fill="none" stroke="#ffff00" stroke-width="1.3" stroke-dasharray="1.5 1"/>
<path d="M152 252c2-3 7-3 9 0v6c-1 3-5 4-7 3l-1-3z" fill="#fff" stroke="#000"/><path d="M151 252h10" stroke="#000" stroke-width="1.5"/><path d="M162 250l4-1v5l-4-1z" fill="#ffff00"/>
<path d="M151 284l4.5-4v2.5h7v3h-7v2.5z" fill="#30a0ff" stroke="#0050a0" stroke-width=".8"/>
<path d="M164 306l-4.5-4v2.5h-7v3h7v2.5z" fill="#c8c8c8"/>
<path d="M150.5 329.5h9v9h-9zM154.5 326.5h9v9h-9zM150.5 329.5l4-3M159.5 329.5l4-3M150.5 338.5l4-3M159.5 338.5l4-3" stroke="#000" stroke-width="1.2" fill="none"/>
<path d="M150.5 350.5l3-2h8l3 2v12h-14z" fill="#fff" stroke="#000" stroke-width="1.1"/><path d="M153.5 348.5v10h8v-10M150.5 362.5l3-4M164.5 362.5l-3-4" stroke="#000" fill="none" stroke-width="1"/>
<path d="M151.5 377v15h14" stroke="#000" fill="none" stroke-width="1"/><path d="M151.5 376l-1.5 2h3zM166 392l-2-1.5v3z" fill="#00008a"/>
<text x="153" y="388" font-size="11" font-family="Liberation Sans" fill="#000">xy</text>
<path d="M151.5 399v15h14" stroke="#000" fill="none" stroke-width="1"/><path d="M151.5 398l-1.5 2h3zM166 414l-2-1.5v3z" fill="#00008a"/>
<text x="153" y="410" font-size="11" font-family="Liberation Sans" fill="#000">yz</text>
<path d="M151.5 421v15h14" stroke="#000" fill="none" stroke-width="1"/><path d="M151.5 420l-1.5 2h3zM166 436l-2-1.5v3z" fill="#00008a"/>
<text x="153" y="432" font-size="11" font-family="Liberation Sans" fill="#000">zx</text>
<path d="M151.5 443v15h14" stroke="#000" fill="none" stroke-width="1"/><path d="M151.5 442l-1.5 2h3zM166 458l-2-1.5v3z" fill="#00008a"/>
<path d="M152 455l8-8M160 447l-3 .5 2.5 2.5" stroke="#000" fill="none"/>
<path d="M154.5 477.5h7v7h-7zM157.5 474.5h7v7h-7z" stroke="#000" fill="none" stroke-width="1.2"/><path d="M150 472h5M152.5 469.5v5" stroke="#000" stroke-width="1.6"/>
<path d="M154.5 499.5h7v7h-7zM157.5 496.5h7v7h-7z" stroke="#000" fill="none" stroke-width="1.2"/><path d="M150 494h5" stroke="#000" stroke-width="1.6"/></svg><!--/VTB-->

<!-- CANVAS -->

<div class="a" style="left:91px;top:71px;width:1px;height:610px;background:#7890a8"></div>
<div class="a" style="left:117px;top:71px;width:1px;height:610px;background:#8a8a8a"></div>
<div class="a" style="left:118px;top:71px;width:1px;height:610px;background:#fff"></div>
<div class="a" style="left:144px;top:71px;width:1px;height:610px;background:#8a8a8a"></div>
<div class="a" style="left:145px;top:71px;width:1px;height:610px;background:#fff"></div>
<div class="a" style="left:171px;top:71px;width:1px;height:610px;background:#8a8a8a"></div>
<div class="a" style="left:172px;top:71px;width:1px;height:610px;background:#fff"></div>
<!-- h scrollbar -->
<div class="a" style="left:201px;top:83px;width:1037px;height:17px;background:#eeeeee;border:1px solid #333"></div>
<div class="a" style="left:202px;top:84px;width:1035px;height:1px;background:#b8cfe5"></div>
<div class="a" style="left:202px;top:98px;width:1035px;height:1px;background:#9ab4cc"></div>
<div class="a" style="left:217px;top:84px;width:1px;height:15px;background:#9ab4cc"></div>
<div class="a" style="left:1220px;top:84px;width:1px;height:15px;background:#9ab4cc"></div>
<div class="a" style="left:674px;top:84px;width:92px;height:14px;background:linear-gradient(#e4ecf5,#fdfdfe 30%,#dfe8f2 60%,#c8d8ea);border:1px solid #6f91c8"></div>
<div class="a" style="left:717px;top:88px;width:5px;height:7px;border-left:1px solid #5a7ab0;border-right:1px solid #5a7ab0"><div class="a" style="left:1px;top:0;width:1px;height:7px;background:#5a7ab0"></div></div>
<svg width="1100" height="20" style="left:190px;top:82px"><path d="M17.8 9.8l4.2-4.2v8.4z M1041.5 9.8l-4.5-4.3v8.6z" fill="#222"/></svg>
<!-- v scrollbar -->
<div class="a" style="left:1238px;top:100px;width:17px;height:552px;background:#eeeeee;border:1px solid #333"></div>
<div class="a" style="left:1239px;top:101px;width:1px;height:550px;background:#b8cfe5"></div>
<div class="a" style="left:1252px;top:101px;width:1px;height:550px;background:#9ab4cc"></div>
<div class="a" style="left:1240px;top:116px;width:12px;height:1px;background:#9ab4cc"></div>
<div class="a" style="left:1240px;top:634px;width:12px;height:1px;background:#9ab4cc"></div>
<div class="a" style="left:1239px;top:352px;width:14px;height:47px;background:linear-gradient(90deg,#e4ecf5,#fdfdfe 30%,#dfe8f2 60%,#c8d8ea);border:1px solid #6f91c8"></div>
<div class="a" style="left:1242px;top:373px;width:8px;height:5px;border-top:1px solid #5a7ab0;border-bottom:1px solid #5a7ab0"><div class="a" style="left:0;top:1px;width:8px;height:1px;background:#5a7ab0"></div></div>
<svg width="20" height="560" style="left:1238px;top:100px"><path d="M8.5 6.5l-4.5 4.5h9z M8.5 545l-4.5-4.5h9z" fill="#222"/></svg>
<!-- canvas white -->
<div class="a" style="left:201px;top:100px;width:1037px;height:552px;background:#fff;overflow:hidden">
<!--DRAW--><svg width="1280" height="750" style="left:-201px;top:-100px">
<path d="M404 219h1v1h-1zM407 203h1v1h-1zM409 211h1v1h-1zM410 219h1v1h-1zM411 215h1v1h-1zM412 227h1v1h-1zM414 235h1v1h-1zM415 243h1v1h-1zM417 251h1v1h-1zM418 211h1v1h-1zM418 259h1v1h-1zM419 296h1v1h-1zM420 267h1v1h-1zM422 275h1v1h-1zM423 283h1v1h-1zM425 207h1v1h-1zM425 291h1v1h-1zM426 292h1v1h-1zM427 299h1v1h-1zM428 306h1v1h-1zM430 314h1v1h-1zM431 322h1v1h-1zM432 203h1v1h-1zM433 288h1v1h-1zM433 330h1v1h-1zM435 338h1v1h-1zM436 346h1v1h-1zM437 371h1v1h-1zM438 354h1v1h-1zM439 198h1v1h-1zM440 284h1v1h-1zM440 362h1v1h-1zM441 370h1v1h-1zM443 378h1v1h-1zM444 367h1v1h-1zM444 386h1v1h-1zM446 194h1v1h-1zM446 394h1v1h-1zM447 279h1v1h-1zM448 402h1v1h-1zM448 449h1v1h-1zM449 410h1v1h-1zM451 363h1v1h-1zM451 418h1v1h-1zM453 190h1v1h-1zM453 426h1v1h-1zM454 275h1v1h-1zM454 434h1v1h-1zM455 445h1v1h-1zM456 442h1v1h-1zM457 450h1v1h-1zM458 359h1v1h-1zM459 186h1v1h-1zM459 458h1v1h-1zM461 271h1v1h-1zM461 466h1v1h-1zM462 441h1v1h-1zM462 474h1v1h-1zM463 526h1v1h-1zM464 482h1v1h-1zM465 355h1v1h-1zM466 182h1v1h-1zM466 490h1v1h-1zM467 498h1v1h-1zM468 267h1v1h-1zM469 437h1v1h-1zM469 506h1v1h-1zM470 513h1v1h-1zM470 522h1v1h-1zM472 350h1v1h-1zM472 521h1v1h-1zM473 178h1v1h-1zM474 263h1v1h-1zM474 529h1v1h-1zM475 537h1v1h-1zM476 433h1v1h-1zM477 518h1v1h-1zM477 545h1v1h-1zM477 601h1v1h-1zM479 346h1v1h-1zM479 553h1v1h-1zM480 174h1v1h-1zM480 561h1v1h-1zM481 259h1v1h-1zM482 569h1v1h-1zM483 429h1v1h-1zM483 577h1v1h-1zM484 514h1v1h-1zM484 597h1v1h-1zM485 342h1v1h-1zM485 585h1v1h-1zM487 170h1v1h-1zM487 593h1v1h-1zM488 255h1v1h-1zM488 601h1v1h-1zM490 424h1v1h-1zM490 609h1v1h-1zM491 510h1v1h-1zM491 593h1v1h-1zM492 338h1v1h-1zM494 152h1v1h-1zM494 166h1v1h-1zM494 621h1v1h-1zM495 160h1v1h-1zM495 250h1v1h-1zM496 615h1v1h-1zM497 168h1v1h-1zM497 420h1v1h-1zM498 505h1v1h-1zM498 589h1v1h-1zM499 176h1v1h-1zM499 334h1v1h-1zM500 184h1v1h-1zM501 162h1v1h-1zM501 617h1v1h-1zM502 192h1v1h-1zM502 246h1v1h-1zM502 621h1v1h-1zM504 200h1v1h-1zM504 416h1v1h-1zM505 501h1v1h-1zM505 585h1v1h-1zM506 207h1v1h-1zM506 330h1v1h-1zM507 215h1v1h-1zM508 157h1v1h-1zM508 613h1v1h-1zM508 627h1v1h-1zM509 223h1v1h-1zM509 242h1v1h-1zM510 412h1v1h-1zM511 231h1v1h-1zM512 239h1v1h-1zM512 497h1v1h-1zM512 580h1v1h-1zM513 326h1v1h-1zM514 247h1v1h-1zM514 634h1v1h-1zM515 153h1v1h-1zM515 608h1v1h-1zM516 238h1v1h-1zM516 255h1v1h-1zM517 408h1v1h-1zM518 263h1v1h-1zM519 271h1v1h-1zM519 493h1v1h-1zM519 576h1v1h-1zM520 322h1v1h-1zM520 640h1v1h-1zM521 279h1v1h-1zM522 149h1v1h-1zM522 604h1v1h-1zM523 234h1v1h-1zM523 287h1v1h-1zM524 295h1v1h-1zM524 404h1v1h-1zM525 489h1v1h-1zM526 303h1v1h-1zM526 572h1v1h-1zM526 646h1v1h-1zM527 317h1v1h-1zM528 310h1v1h-1zM529 145h1v1h-1zM530 230h1v1h-1zM530 318h1v1h-1zM530 600h1v1h-1zM531 326h1v1h-1zM531 400h1v1h-1zM532 485h1v1h-1zM533 334h1v1h-1zM533 568h1v1h-1zM534 313h1v1h-1zM535 342h1v1h-1zM536 141h1v1h-1zM536 350h1v1h-1zM537 225h1v1h-1zM537 596h1v1h-1zM538 358h1v1h-1zM538 396h1v1h-1zM539 481h1v1h-1zM540 366h1v1h-1zM540 564h1v1h-1zM541 309h1v1h-1zM542 374h1v1h-1zM543 137h1v1h-1zM543 382h1v1h-1zM544 221h1v1h-1zM544 592h1v1h-1zM545 390h1v1h-1zM545 392h1v1h-1zM546 477h1v1h-1zM547 398h1v1h-1zM547 560h1v1h-1zM548 305h1v1h-1zM548 405h1v1h-1zM550 133h1v1h-1zM550 413h1v1h-1zM551 217h1v1h-1zM551 588h1v1h-1zM552 388h1v1h-1zM552 421h1v1h-1zM553 472h1v1h-1zM554 429h1v1h-1zM554 556h1v1h-1zM555 301h1v1h-1zM555 437h1v1h-1zM556 129h1v1h-1zM557 445h1v1h-1zM558 213h1v1h-1zM558 583h1v1h-1zM559 383h1v1h-1zM559 453h1v1h-1zM560 461h1v1h-1zM560 468h1v1h-1zM561 552h1v1h-1zM562 297h1v1h-1zM562 469h1v1h-1zM563 125h1v1h-1zM564 477h1v1h-1zM565 209h1v1h-1zM565 579h1v1h-1zM566 379h1v1h-1zM566 485h1v1h-1zM567 464h1v1h-1zM567 493h1v1h-1zM568 548h1v1h-1zM569 293h1v1h-1zM569 501h1v1h-1zM570 121h1v1h-1zM571 508h1v1h-1zM572 205h1v1h-1zM572 516h1v1h-1zM572 575h1v1h-1zM573 375h1v1h-1zM574 460h1v1h-1zM574 524h1v1h-1zM575 289h1v1h-1zM575 544h1v1h-1zM576 532h1v1h-1zM577 116h1v1h-1zM578 540h1v1h-1zM579 201h1v1h-1zM579 548h1v1h-1zM579 571h1v1h-1zM580 100h1v1h-1zM580 371h1v1h-1zM581 456h1v1h-1zM581 556h1v1h-1zM582 108h1v1h-1zM582 285h1v1h-1zM582 539h1v1h-1zM583 116h1v1h-1zM584 112h1v1h-1zM585 124h1v1h-1zM585 196h1v1h-1zM586 567h1v1h-1zM587 132h1v1h-1zM587 367h1v1h-1zM588 140h1v1h-1zM588 452h1v1h-1zM589 280h1v1h-1zM589 535h1v1h-1zM590 148h1v1h-1zM591 108h1v1h-1zM591 156h1v1h-1zM592 192h1v1h-1zM593 164h1v1h-1zM593 563h1v1h-1zM594 363h1v1h-1zM595 172h1v1h-1zM595 448h1v1h-1zM596 180h1v1h-1zM596 276h1v1h-1zM596 531h1v1h-1zM596 651h1v1h-1zM598 104h1v1h-1zM598 188h1v1h-1zM599 188h1v1h-1zM600 196h1v1h-1zM601 204h1v1h-1zM601 359h1v1h-1zM601 558h1v1h-1zM602 444h1v1h-1zM603 212h1v1h-1zM603 272h1v1h-1zM603 527h1v1h-1zM603 647h1v1h-1zM604 220h1v1h-1zM605 100h1v1h-1zM606 184h1v1h-1zM606 228h1v1h-1zM608 236h1v1h-1zM608 355h1v1h-1zM608 554h1v1h-1zM609 244h1v1h-1zM609 439h1v1h-1zM610 268h1v1h-1zM610 523h1v1h-1zM610 643h1v1h-1zM611 252h1v1h-1zM613 180h1v1h-1zM613 260h1v1h-1zM614 268h1v1h-1zM615 351h1v1h-1zM615 550h1v1h-1zM616 276h1v1h-1zM616 435h1v1h-1zM617 264h1v1h-1zM617 284h1v1h-1zM617 519h1v1h-1zM617 639h1v1h-1zM619 292h1v1h-1zM620 176h1v1h-1zM621 300h1v1h-1zM622 307h1v1h-1zM622 347h1v1h-1zM622 546h1v1h-1zM623 431h1v1h-1zM624 260h1v1h-1zM624 315h1v1h-1zM624 515h1v1h-1zM624 635h1v1h-1zM626 323h1v1h-1zM627 172h1v1h-1zM627 331h1v1h-1zM628 342h1v1h-1zM629 339h1v1h-1zM629 542h1v1h-1zM630 347h1v1h-1zM630 427h1v1h-1zM631 256h1v1h-1zM631 511h1v1h-1zM631 631h1v1h-1zM632 355h1v1h-1zM634 167h1v1h-1zM634 363h1v1h-1zM635 338h1v1h-1zM635 371h1v1h-1zM636 423h1v1h-1zM636 538h1v1h-1zM637 379h1v1h-1zM638 252h1v1h-1zM638 507h1v1h-1zM638 627h1v1h-1zM639 387h1v1h-1zM640 395h1v1h-1zM641 163h1v1h-1zM642 334h1v1h-1zM642 403h1v1h-1zM643 411h1v1h-1zM643 419h1v1h-1zM643 533h1v1h-1zM645 247h1v1h-1zM645 419h1v1h-1zM645 503h1v1h-1zM645 623h1v1h-1zM647 427h1v1h-1zM648 159h1v1h-1zM648 435h1v1h-1zM649 330h1v1h-1zM650 415h1v1h-1zM650 443h1v1h-1zM650 529h1v1h-1zM651 618h1v1h-1zM652 243h1v1h-1zM652 451h1v1h-1zM652 498h1v1h-1zM653 459h1v1h-1zM655 155h1v1h-1zM655 467h1v1h-1zM656 326h1v1h-1zM656 475h1v1h-1zM657 411h1v1h-1zM657 525h1v1h-1zM658 239h1v1h-1zM658 483h1v1h-1zM658 614h1v1h-1zM659 494h1v1h-1zM660 491h1v1h-1zM661 499h1v1h-1zM662 151h1v1h-1zM663 322h1v1h-1zM663 507h1v1h-1zM664 407h1v1h-1zM664 521h1v1h-1zM665 235h1v1h-1zM665 610h1v1h-1zM666 490h1v1h-1zM669 147h1v1h-1zM670 318h1v1h-1zM671 402h1v1h-1zM672 231h1v1h-1zM672 517h1v1h-1zM672 606h1v1h-1zM673 486h1v1h-1zM676 142h1v1h-1zM677 100h1v1h-1zM677 314h1v1h-1zM678 108h1v1h-1zM678 398h1v1h-1zM679 227h1v1h-1zM679 513h1v1h-1zM679 602h1v1h-1zM680 116h1v1h-1zM680 482h1v1h-1zM681 124h1v1h-1zM683 132h1v1h-1zM683 138h1v1h-1zM684 310h1v1h-1zM685 140h1v1h-1zM685 394h1v1h-1zM686 148h1v1h-1zM686 223h1v1h-1zM686 508h1v1h-1zM686 598h1v1h-1zM687 478h1v1h-1zM688 156h1v1h-1zM689 164h1v1h-1zM690 134h1v1h-1zM691 172h1v1h-1zM691 306h1v1h-1zM692 180h1v1h-1zM692 390h1v1h-1zM693 219h1v1h-1zM693 504h1v1h-1zM693 594h1v1h-1zM694 188h1v1h-1zM694 474h1v1h-1zM696 130h1v1h-1zM696 196h1v1h-1zM697 204h1v1h-1zM698 301h1v1h-1zM699 212h1v1h-1zM699 386h1v1h-1zM700 215h1v1h-1zM700 220h1v1h-1zM700 500h1v1h-1zM700 590h1v1h-1zM701 470h1v1h-1zM702 228h1v1h-1zM703 126h1v1h-1zM704 236h1v1h-1zM705 244h1v1h-1zM705 297h1v1h-1zM706 382h1v1h-1zM707 210h1v1h-1zM707 252h1v1h-1zM708 260h1v1h-1zM708 466h1v1h-1zM710 122h1v1h-1zM710 268h1v1h-1zM711 276h1v1h-1zM712 293h1v1h-1zM713 284h1v1h-1zM713 378h1v1h-1zM714 206h1v1h-1zM715 292h1v1h-1zM715 462h1v1h-1zM716 300h1v1h-1zM717 118h1v1h-1zM718 308h1v1h-1zM719 289h1v1h-1zM719 316h1v1h-1zM720 374h1v1h-1zM721 202h1v1h-1zM721 324h1v1h-1zM722 457h1v1h-1zM723 332h1v1h-1zM724 113h1v1h-1zM724 340h1v1h-1zM726 285h1v1h-1zM726 348h1v1h-1zM727 356h1v1h-1zM727 369h1v1h-1zM728 198h1v1h-1zM729 364h1v1h-1zM729 453h1v1h-1zM730 372h1v1h-1zM731 109h1v1h-1zM732 380h1v1h-1zM733 281h1v1h-1zM734 365h1v1h-1zM734 388h1v1h-1zM735 194h1v1h-1zM735 396h1v1h-1zM736 449h1v1h-1zM737 404h1v1h-1zM738 105h1v1h-1zM738 412h1v1h-1zM740 277h1v1h-1zM740 420h1v1h-1zM741 361h1v1h-1zM742 190h1v1h-1zM743 445h1v1h-1zM745 101h1v1h-1zM746 273h1v1h-1zM748 186h1v1h-1zM748 357h1v1h-1zM750 441h1v1h-1zM753 269h1v1h-1zM754 353h1v1h-1zM755 182h1v1h-1zM757 437h1v1h-1zM760 265h1v1h-1zM761 349h1v1h-1zM762 177h1v1h-1zM764 433h1v1h-1zM767 260h1v1h-1zM768 345h1v1h-1zM769 173h1v1h-1zM771 429h1v1h-1zM774 101h1v1h-1zM774 256h1v1h-1zM775 109h1v1h-1zM775 341h1v1h-1zM776 169h1v1h-1zM777 117h1v1h-1zM778 125h1v1h-1zM778 425h1v1h-1zM780 132h1v1h-1zM781 252h1v1h-1zM782 140h1v1h-1zM782 336h1v1h-1zM783 148h1v1h-1zM783 165h1v1h-1zM785 156h1v1h-1zM785 421h1v1h-1zM786 164h1v1h-1zM788 172h1v1h-1zM788 248h1v1h-1zM789 332h1v1h-1zM790 161h1v1h-1zM790 180h1v1h-1zM791 187h1v1h-1zM792 416h1v1h-1zM793 195h1v1h-1zM794 102h1v1h-1zM794 203h1v1h-1zM795 244h1v1h-1zM796 110h1v1h-1zM796 211h1v1h-1zM796 328h1v1h-1zM798 118h1v1h-1zM798 157h1v1h-1zM798 219h1v1h-1zM799 126h1v1h-1zM799 227h1v1h-1zM799 412h1v1h-1zM801 134h1v1h-1zM801 235h1v1h-1zM802 240h1v1h-1zM803 142h1v1h-1zM803 242h1v1h-1zM803 324h1v1h-1zM804 150h1v1h-1zM804 162h1v1h-1zM804 250h1v1h-1zM806 158h1v1h-1zM806 258h1v1h-1zM806 408h1v1h-1zM807 240h1v1h-1zM807 266h1v1h-1zM808 166h1v1h-1zM809 175h1v1h-1zM809 274h1v1h-1zM810 167h1v1h-1zM810 320h1v1h-1zM811 183h1v1h-1zM811 282h1v1h-1zM812 191h1v1h-1zM812 290h1v1h-1zM813 245h1v1h-1zM813 404h1v1h-1zM814 105h1v1h-1zM814 199h1v1h-1zM814 297h1v1h-1zM815 305h1v1h-1zM816 173h1v1h-1zM816 207h1v1h-1zM817 215h1v1h-1zM817 313h1v1h-1zM819 223h1v1h-1zM819 250h1v1h-1zM819 321h1v1h-1zM820 111h1v1h-1zM820 300h1v1h-1zM820 329h1v1h-1zM820 400h1v1h-1zM821 231h1v1h-1zM822 178h1v1h-1zM822 239h1v1h-1zM822 337h1v1h-1zM824 247h1v1h-1zM824 345h1v1h-1zM825 352h1v1h-1zM826 116h1v1h-1zM826 255h1v1h-1zM826 256h1v1h-1zM826 305h1v1h-1zM827 263h1v1h-1zM827 360h1v1h-1zM828 183h1v1h-1zM828 368h1v1h-1zM829 271h1v1h-1zM830 279h1v1h-1zM830 376h1v1h-1zM832 122h1v1h-1zM832 261h1v1h-1zM832 287h1v1h-1zM832 311h1v1h-1zM834 295h1v1h-1zM835 189h1v1h-1zM835 303h1v1h-1zM837 312h1v1h-1zM838 127h1v1h-1zM838 266h1v1h-1zM838 316h1v1h-1zM839 320h1v1h-1zM840 328h1v1h-1zM841 194h1v1h-1zM842 336h1v1h-1zM843 344h1v1h-1zM844 133h1v1h-1zM844 271h1v1h-1zM844 322h1v1h-1zM845 352h1v1h-1zM846 107h1v1h-1zM847 200h1v1h-1zM847 360h1v1h-1zM848 115h1v1h-1zM848 368h1v1h-1zM849 123h1v1h-1zM850 138h1v1h-1zM850 276h1v1h-1zM850 327h1v1h-1zM850 376h1v1h-1zM851 131h1v1h-1zM852 138h1v1h-1zM853 205h1v1h-1zM854 146h1v1h-1zM855 154h1v1h-1zM856 281h1v1h-1zM857 144h1v1h-1zM857 162h1v1h-1zM857 332h1v1h-1zM859 170h1v1h-1zM859 210h1v1h-1zM860 178h1v1h-1zM862 186h1v1h-1zM863 149h1v1h-1zM863 194h1v1h-1zM863 287h1v1h-1zM863 338h1v1h-1zM865 201h1v1h-1zM865 216h1v1h-1zM866 209h1v1h-1zM868 217h1v1h-1zM869 155h1v1h-1zM869 292h1v1h-1zM869 343h1v1h-1zM870 225h1v1h-1zM871 221h1v1h-1zM871 233h1v1h-1zM873 241h1v1h-1zM874 249h1v1h-1zM875 160h1v1h-1zM875 297h1v1h-1zM875 348h1v1h-1zM876 100h1v1h-1zM876 257h1v1h-1zM877 264h1v1h-1zM878 226h1v1h-1zM879 272h1v1h-1zM880 572h1v1h-1zM881 166h1v1h-1zM881 280h1v1h-1zM881 302h1v1h-1zM881 354h1v1h-1zM882 105h1v1h-1zM882 288h1v1h-1zM884 232h1v1h-1zM884 296h1v1h-1zM885 304h1v1h-1zM886 577h1v1h-1zM887 171h1v1h-1zM887 307h1v1h-1zM887 312h1v1h-1zM887 359h1v1h-1zM888 111h1v1h-1zM889 320h1v1h-1zM890 237h1v1h-1zM890 327h1v1h-1zM892 335h1v1h-1zM892 583h1v1h-1zM893 177h1v1h-1zM893 312h1v1h-1zM893 343h1v1h-1zM893 365h1v1h-1zM894 116h1v1h-1zM895 351h1v1h-1zM896 243h1v1h-1zM896 359h1v1h-1zM897 118h1v1h-1zM898 367h1v1h-1zM898 588h1v1h-1zM899 126h1v1h-1zM899 182h1v1h-1zM899 370h1v1h-1zM900 121h1v1h-1zM900 134h1v1h-1zM900 318h1v1h-1zM900 375h1v1h-1zM900 443h1v1h-1zM900 649h1v1h-1zM901 383h1v1h-1zM902 142h1v1h-1zM902 248h1v1h-1zM903 150h1v1h-1zM903 390h1v1h-1zM904 398h1v1h-1zM905 158h1v1h-1zM905 187h1v1h-1zM905 375h1v1h-1zM905 594h1v1h-1zM906 126h1v1h-1zM906 323h1v1h-1zM906 406h1v1h-1zM906 448h1v1h-1zM907 166h1v1h-1zM907 414h1v1h-1zM907 645h1v1h-1zM908 174h1v1h-1zM908 253h1v1h-1zM909 422h1v1h-1zM910 182h1v1h-1zM911 190h1v1h-1zM911 381h1v1h-1zM911 430h1v1h-1zM911 599h1v1h-1zM912 132h1v1h-1zM912 193h1v1h-1zM912 328h1v1h-1zM912 438h1v1h-1zM913 197h1v1h-1zM913 454h1v1h-1zM914 446h1v1h-1zM914 640h1v1h-1zM915 205h1v1h-1zM915 259h1v1h-1zM915 453h1v1h-1zM916 213h1v1h-1zM917 386h1v1h-1zM917 461h1v1h-1zM917 605h1v1h-1zM918 137h1v1h-1zM918 198h1v1h-1zM918 221h1v1h-1zM918 333h1v1h-1zM918 469h1v1h-1zM919 229h1v1h-1zM919 459h1v1h-1zM920 477h1v1h-1zM921 237h1v1h-1zM921 264h1v1h-1zM922 636h1v1h-1zM923 245h1v1h-1zM923 610h1v1h-1zM924 142h1v1h-1zM924 204h1v1h-1zM924 253h1v1h-1zM924 338h1v1h-1zM924 392h1v1h-1zM925 464h1v1h-1zM926 261h1v1h-1zM927 269h1v1h-1zM928 269h1v1h-1zM929 276h1v1h-1zM929 615h1v1h-1zM929 632h1v1h-1zM930 147h1v1h-1zM930 209h1v1h-1zM930 343h1v1h-1zM930 397h1v1h-1zM931 284h1v1h-1zM931 469h1v1h-1zM932 292h1v1h-1zM933 275h1v1h-1zM934 300h1v1h-1zM935 621h1v1h-1zM936 215h1v1h-1zM936 308h1v1h-1zM936 348h1v1h-1zM936 402h1v1h-1zM936 627h1v1h-1zM937 153h1v1h-1zM937 316h1v1h-1zM938 475h1v1h-1zM939 280h1v1h-1zM939 324h1v1h-1zM940 332h1v1h-1zM941 626h1v1h-1zM942 220h1v1h-1zM942 340h1v1h-1zM942 408h1v1h-1zM943 158h1v1h-1zM943 354h1v1h-1zM943 623h1v1h-1zM944 347h1v1h-1zM944 480h1v1h-1zM945 286h1v1h-1zM945 355h1v1h-1zM947 363h1v1h-1zM948 226h1v1h-1zM948 371h1v1h-1zM948 413h1v1h-1zM948 632h1v1h-1zM949 163h1v1h-1zM949 359h1v1h-1zM950 379h1v1h-1zM950 485h1v1h-1zM950 619h1v1h-1zM952 291h1v1h-1zM952 387h1v1h-1zM953 395h1v1h-1zM954 231h1v1h-1zM954 418h1v1h-1zM954 637h1v1h-1zM955 168h1v1h-1zM955 364h1v1h-1zM955 403h1v1h-1zM956 411h1v1h-1zM957 491h1v1h-1zM958 296h1v1h-1zM958 419h1v1h-1zM958 614h1v1h-1zM960 237h1v1h-1zM960 424h1v1h-1zM960 426h1v1h-1zM960 643h1v1h-1zM961 174h1v1h-1zM961 369h1v1h-1zM961 434h1v1h-1zM961 518h1v1h-1zM962 177h1v1h-1zM963 442h1v1h-1zM963 496h1v1h-1zM964 185h1v1h-1zM964 302h1v1h-1zM964 450h1v1h-1zM965 193h1v1h-1zM965 610h1v1h-1zM966 429h1v1h-1zM966 458h1v1h-1zM966 648h1v1h-1zM967 179h1v1h-1zM967 201h1v1h-1zM967 242h1v1h-1zM967 374h1v1h-1zM968 209h1v1h-1zM968 466h1v1h-1zM968 523h1v1h-1zM969 474h1v1h-1zM969 501h1v1h-1zM970 217h1v1h-1zM970 307h1v1h-1zM971 225h1v1h-1zM971 482h1v1h-1zM972 435h1v1h-1zM972 490h1v1h-1zM972 606h1v1h-1zM973 184h1v1h-1zM973 232h1v1h-1zM973 248h1v1h-1zM973 379h1v1h-1zM974 240h1v1h-1zM974 498h1v1h-1zM974 529h1v1h-1zM976 248h1v1h-1zM976 312h1v1h-1zM976 505h1v1h-1zM976 507h1v1h-1zM977 256h1v1h-1zM977 513h1v1h-1zM978 440h1v1h-1zM979 189h1v1h-1zM979 253h1v1h-1zM979 264h1v1h-1zM979 602h1v1h-1zM980 272h1v1h-1zM980 385h1v1h-1zM980 534h1v1h-1zM982 280h1v1h-1zM982 318h1v1h-1zM982 512h1v1h-1zM983 288h1v1h-1zM984 445h1v1h-1zM985 195h1v1h-1zM985 259h1v1h-1zM985 296h1v1h-1zM986 304h1v1h-1zM986 390h1v1h-1zM986 540h1v1h-1zM987 597h1v1h-1zM988 312h1v1h-1zM988 323h1v1h-1zM988 517h1v1h-1zM990 320h1v1h-1zM991 264h1v1h-1zM991 327h1v1h-1zM991 451h1v1h-1zM992 200h1v1h-1zM992 395h1v1h-1zM993 335h1v1h-1zM993 545h1v1h-1zM994 343h1v1h-1zM994 522h1v1h-1zM994 593h1v1h-1zM995 329h1v1h-1zM996 351h1v1h-1zM997 270h1v1h-1zM997 359h1v1h-1zM997 456h1v1h-1zM998 205h1v1h-1zM998 400h1v1h-1zM999 367h1v1h-1zM999 550h1v1h-1zM1000 375h1v1h-1zM1001 334h1v1h-1zM1001 528h1v1h-1zM1001 589h1v1h-1zM1002 383h1v1h-1zM1003 275h1v1h-1zM1003 391h1v1h-1zM1003 462h1v1h-1zM1004 210h1v1h-1zM1004 405h1v1h-1zM1005 399h1v1h-1zM1005 556h1v1h-1zM1006 407h1v1h-1zM1007 339h1v1h-1zM1007 533h1v1h-1zM1008 415h1v1h-1zM1008 584h1v1h-1zM1009 281h1v1h-1zM1009 422h1v1h-1zM1009 467h1v1h-1zM1010 216h1v1h-1zM1010 410h1v1h-1zM1011 430h1v1h-1zM1011 561h1v1h-1zM1013 345h1v1h-1zM1013 438h1v1h-1zM1013 538h1v1h-1zM1014 446h1v1h-1zM1015 472h1v1h-1zM1015 580h1v1h-1zM1016 221h1v1h-1zM1016 286h1v1h-1zM1016 454h1v1h-1zM1017 416h1v1h-1zM1017 462h1v1h-1zM1017 567h1v1h-1zM1018 229h1v1h-1zM1019 237h1v1h-1zM1019 350h1v1h-1zM1019 470h1v1h-1zM1020 478h1v1h-1zM1020 544h1v1h-1zM1021 245h1v1h-1zM1021 478h1v1h-1zM1022 292h1v1h-1zM1022 486h1v1h-1zM1023 252h1v1h-1zM1023 421h1v1h-1zM1023 494h1v1h-1zM1023 576h1v1h-1zM1024 260h1v1h-1zM1024 572h1v1h-1zM1025 355h1v1h-1zM1025 502h1v1h-1zM1026 268h1v1h-1zM1026 510h1v1h-1zM1026 549h1v1h-1zM1027 276h1v1h-1zM1027 483h1v1h-1zM1028 297h1v1h-1zM1028 517h1v1h-1zM1029 284h1v1h-1zM1029 426h1v1h-1zM1029 525h1v1h-1zM1030 571h1v1h-1zM1030 578h1v1h-1zM1031 292h1v1h-1zM1031 533h1v1h-1zM1032 300h1v1h-1zM1032 361h1v1h-1zM1032 541h1v1h-1zM1032 554h1v1h-1zM1033 489h1v1h-1zM1034 303h1v1h-1zM1034 307h1v1h-1zM1034 549h1v1h-1zM1035 431h1v1h-1zM1035 557h1v1h-1zM1036 315h1v1h-1zM1036 583h1v1h-1zM1037 323h1v1h-1zM1037 565h1v1h-1zM1037 567h1v1h-1zM1038 366h1v1h-1zM1039 331h1v1h-1zM1039 494h1v1h-1zM1039 560h1v1h-1zM1040 308h1v1h-1zM1040 339h1v1h-1zM1041 436h1v1h-1zM1042 347h1v1h-1zM1042 589h1v1h-1zM1044 355h1v1h-1zM1044 372h1v1h-1zM1045 363h1v1h-1zM1045 499h1v1h-1zM1045 565h1v1h-1zM1046 651h1v1h-1zM1047 370h1v1h-1zM1047 441h1v1h-1zM1049 378h1v1h-1zM1049 594h1v1h-1zM1050 377h1v1h-1zM1050 386h1v1h-1zM1051 505h1v1h-1zM1051 570h1v1h-1zM1052 394h1v1h-1zM1053 402h1v1h-1zM1054 447h1v1h-1zM1054 647h1v1h-1zM1055 410h1v1h-1zM1055 599h1v1h-1zM1057 418h1v1h-1zM1057 575h1v1h-1zM1058 425h1v1h-1zM1058 510h1v1h-1zM1060 433h1v1h-1zM1060 452h1v1h-1zM1061 605h1v1h-1zM1061 642h1v1h-1zM1062 441h1v1h-1zM1063 449h1v1h-1zM1064 515h1v1h-1zM1064 581h1v1h-1zM1065 457h1v1h-1zM1066 457h1v1h-1zM1066 465h1v1h-1zM1067 610h1v1h-1zM1068 473h1v1h-1zM1069 638h1v1h-1zM1070 480h1v1h-1zM1070 521h1v1h-1zM1070 586h1v1h-1zM1071 488h1v1h-1zM1072 462h1v1h-1zM1073 496h1v1h-1zM1074 616h1v1h-1zM1075 504h1v1h-1zM1076 512h1v1h-1zM1076 526h1v1h-1zM1076 591h1v1h-1zM1077 633h1v1h-1zM1078 520h1v1h-1zM1079 528h1v1h-1zM1080 621h1v1h-1zM1081 536h1v1h-1zM1082 532h1v1h-1zM1083 543h1v1h-1zM1083 597h1v1h-1zM1084 551h1v1h-1zM1084 629h1v1h-1zM1086 559h1v1h-1zM1086 627h1v1h-1zM1088 537h1v1h-1zM1088 567h1v1h-1zM1089 575h1v1h-1zM1089 602h1v1h-1zM1091 583h1v1h-1zM1092 591h1v1h-1zM1092 624h1v1h-1zM1094 598h1v1h-1zM1095 607h1v1h-1zM1096 606h1v1h-1zM1097 614h1v1h-1zM1099 622h1v1h-1zM1102 612h1v1h-1z" fill="#000"/>
<polygon points="752.5,244.3 787.5,245.8 809.4,250.2 831.3,256.8 853.1,266.6 870.6,277.6 888.1,288.5 905.6,303.8 923.1,322.4 936.3,341 945,358.5 952.5,376 959.9,390.9 968.5,420.8 970,450.6 969.3,484.2 961.8,514 954.3,536.4 939.4,566.3 920.7,588.7 898.4,611 868.5,637.2 842.4,650.3 820,662 690,662 674.3,652.1 651.9,640.9 629.6,626 603.4,603.6 584.8,577.5 569.9,551.4 558.7,525.3 549.3,491.7 548.2,469.3 549.3,432 553,398.4 557.8,389.3 570.6,361.6 583.4,338.1 598.3,316.8 615.4,297.6 634.6,282.7 658,267.7 681.5,259.2 705,252.4 728.4,246.5" fill="#f18a8a" shape-rendering="crispEdges"/>
<polyline points="662.4,352 677.3,367 690,366.5" stroke="#ff0000" stroke-width="1" fill="none" shape-rendering="crispEdges"/>
<polyline points="712.3,228.8 700.5,294.8" stroke="#ff0000" stroke-width="1" fill="none" shape-rendering="crispEdges"/>
<polyline points="712.3,228.8 748.1,324.6" stroke="#ff0000" stroke-width="1" fill="none" shape-rendering="crispEdges"/>
<polyline points="647.7,275.7 688.8,331.5" stroke="#ff0000" stroke-width="1" fill="none" shape-rendering="crispEdges"/>
<polyline points="699.1,294.8 712.3,365.2" stroke="#ff0000" stroke-width="1" fill="none" shape-rendering="crispEdges"/>
<polyline points="699.1,294.8 744.8,338.8" stroke="#ff0000" stroke-width="1" fill="none" shape-rendering="crispEdges"/>
<polyline points="590,335.9 666.8,396" stroke="#ff0000" stroke-width="1" fill="none" shape-rendering="crispEdges"/>
<polyline points="691.7,369.6 749,399" stroke="#ff0000" stroke-width="1" fill="none" shape-rendering="crispEdges"/>
<polyline points="691.7,369.6 710.8,434.1" stroke="#ff0000" stroke-width="1" fill="none" shape-rendering="crispEdges"/>
<polyline points="748.1,324.6 789.7,376 820,420.8 849.9,476.7 868.5,525.3 877.8,562.6" stroke="#ff0000" stroke-width="1" fill="none" shape-rendering="crispEdges"/>
<polyline points="877.8,562.6 881.6,585 879.7,622.3 868.5,635.3" stroke="#ff0000" stroke-width="1" stroke-dasharray="5 3" fill="none" shape-rendering="crispEdges"/>
<polyline points="700.5,294.8 687.3,343.2" stroke="#ff0000" stroke-width="1" stroke-dasharray="5 3" fill="none" shape-rendering="crispEdges"/>
<polyline points="647.7,275.7 655.1,346.1" stroke="#ff0000" stroke-width="1" stroke-dasharray="5 3" fill="none" shape-rendering="crispEdges"/>
<polyline points="590,335.9 655.1,346.1" stroke="#ff0000" stroke-width="1" stroke-dasharray="5 3" fill="none" shape-rendering="crispEdges"/>
<polyline points="622.1,404 607.2,435.7 592.2,474.9 584.8,510.3 584.8,555.1 596,588.7 601.6,598 625.8,622.3" stroke="#ff0000" stroke-width="1" stroke-dasharray="6 3" fill="none" shape-rendering="crispEdges"/>
<polyline points="549.3,491.7 558.7,525.3 584.8,557 622.1,583.1 674.3,599.9 722.8,604.4 775.1,601 838.5,583.1 879.7,564.4 920.7,534.6 948.7,499.1 965.5,461.8 968.5,420.8 959.9,390.9" stroke="#ff0000" stroke-width="1" stroke-dasharray="6 3" fill="none" shape-rendering="crispEdges"/>
<polyline points="759,288.5 791.9,276.5 826.9,272.8 864,277.1 896.9,294.6" stroke="#ff0000" stroke-width="1" stroke-dasharray="6 3" fill="none" shape-rendering="crispEdges"/>
<path d="M712.3 228.8 C716.1 234.3 728.3 253.1 735.0 262.0 C741.7 270.9 747.8 275.8 752.5 282.0 C757.2 288.2 761.9 294.7 763.4 299.4 C764.9 304.1 763.8 306.2 761.3 310.4 C758.8 314.6 750.3 322.2 748.1 324.6" stroke="#ff0000" stroke-width="1" stroke-dasharray="2 2" fill="none" shape-rendering="crispEdges"/>
<path d="M647.7 275.7 C655.8 280.4 688.0 299.0 696.1 303.6" stroke="#ff0000" stroke-width="1" stroke-dasharray="2 2" fill="none" shape-rendering="crispEdges"/>
<path d="M647.7 275.7 C651.4 274.8 661.1 269.4 669.7 270.3 C678.3 271.2 694.2 279.2 699.1 281.0" stroke="#ff0000" stroke-width="1" stroke-dasharray="2 2" fill="none" shape-rendering="crispEdges"/>
<path d="M721.9 313.7 C724.8 314.8 734.7 317.5 739.4 320.2 C744.1 322.9 747.8 326.2 750.3 330.0 C752.8 333.8 754.3 338.8 754.7 343.2 C755.1 347.6 755.0 351.2 752.5 356.3 C750.0 361.4 741.6 370.9 739.4 373.8" stroke="#ff0000" stroke-width="1" stroke-dasharray="2 2" fill="none" shape-rendering="crispEdges"/>
<path d="M590.0 335.9 C593.2 342.6 603.6 364.6 609.0 376.0 C614.4 387.4 616.8 398.3 622.1 404.0 C627.4 409.7 633.2 411.6 640.7 410.3 C648.2 409.1 661.0 401.9 666.9 396.5 C672.8 391.1 674.7 381.0 676.2 377.9" stroke="#ff0000" stroke-width="1" stroke-dasharray="2 2" fill="none" shape-rendering="crispEdges"/>
<ellipse cx="714.2" cy="399.6" rx="35.5" ry="34.5" stroke="#ff0000" stroke-width="1" stroke-dasharray="2 1.5" fill="none" shape-rendering="crispEdges"/>
<polyline points="883.5,94.5 1023.5,218.5 1107,627.5 1063,653.2" stroke="#000" stroke-width="1" fill="none" shape-rendering="crispEdges"/>
<text x="894.5" y="120" font-size="12" letter-spacing="0" fill="#1a1a1a" font-family="Liberation Sans">0</text>
<text x="954.5" y="172.5" font-size="12" letter-spacing="1" fill="#1a1a1a" font-family="Liberation Sans">0.5</text>
<text x="1015.5" y="226" font-size="12" letter-spacing="0" fill="#1a1a1a" font-family="Liberation Sans">1</text>
<text x="1027.5" y="246" font-size="12" letter-spacing="1" fill="#1a1a1a" font-family="Liberation Sans">1.5</text>
<text x="1042" y="323" font-size="12" letter-spacing="0" fill="#1a1a1a" font-family="Liberation Sans">1</text>
<text x="1057.5" y="399.5" font-size="12" letter-spacing="1" fill="#1a1a1a" font-family="Liberation Sans">0.5</text>
<text x="1074" y="476.5" font-size="12" letter-spacing="0" fill="#1a1a1a" font-family="Liberation Sans">0</text>
<text x="1088" y="552.5" font-size="12" letter-spacing="1.8" fill="#1a1a1a" font-family="Liberation Sans">-0.5</text>
<text x="1104.5" y="628.5" font-size="12" letter-spacing="2.5" fill="#1a1a1a" font-family="Liberation Sans">-1</text>
<text x="1097" y="649" font-size="12" letter-spacing="2.5" fill="#1a1a1a" font-family="Liberation Sans">-1</text>
<line x1="245.5" y1="607" x2="241.5" y2="586" stroke="#0000ff" stroke-width="3"/>
<line x1="245.5" y1="607" x2="222" y2="621.5" stroke="#ff0000" stroke-width="2.8"/>
<line x1="245.5" y1="607" x2="262.5" y2="622" stroke="#00ff00" stroke-width="2.4"/>
<text x="237" y="586" font-size="13" fill="#1a1a1a" font-family="Liberation Sans">z</text>
<text x="212" y="632.5" font-size="13" fill="#1a1a1a" font-family="Liberation Sans">x</text>
<text x="263.5" y="634" font-size="13" fill="#1a1a1a" font-family="Liberation Sans">v</text>
<path d="M552 257 L552 272 L555.5 268.6 L558 274 L560.6 272.8 L558.2 267.6 L562.6 267.6 Z" fill="#fff" stroke="#000" stroke-width="1.4" stroke-linejoin="miter"/>
</svg><!--/DRAW-->
</div>


<!-- LOG -->

<div class="a" style="left:91px;top:681px;width:1189px;height:47px;background:#eeeeee;border-top:1px solid #8a8a8a;border-left:1px solid #7890a8"></div>
<div class="a" style="left:97px;top:683px;font-size:12px;line-height:15px;letter-spacing:0.46px;color:#2e2e46;white-space:nowrap">Adding cone with label 'CON4'.<br>Adding cone with label 'CON5'.<br>Adding sphere with label 'SPH1'.</div>
<div class="a" style="left:1259px;top:682px;width:16px;height:44px;background:#eeeeee;border:1px solid #7f93aa"></div>
<div class="a" style="left:1260px;top:697px;width:14px;height:1px;background:#7f93aa"></div>
<div class="a" style="left:1260px;top:698px;width:14px;height:1px;background:#c9d9ea"></div>
<div class="a" style="left:1260px;top:710px;width:14px;height:1px;background:#7f93aa"></div>
<div class="a" style="left:1260px;top:698px;width:1px;height:12px;background:#c9d9ea"></div>
<div class="a" style="left:1278px;top:681px;width:2px;height:47px;background:#f4f4f4"></div>
<svg width="20" height="50" style="left:1258px;top:681px"><path d="M10 6.5l-4.5 4h9z M10 40.5l-4.5-4h9z" fill="#222"/></svg>


<!-- STATUS -->

<div class="a" style="left:0;top:728px;width:1280px;height:22px;background:#eeeeee;border-top:1px solid #fff"></div>
<div class="a" style="left:0;top:731px;width:256px;height:16px;border-top:1px solid #9a9a9a;border-left:1px solid #9a9a9a;border-bottom:1px solid #fff;border-right:1px solid #fff"></div>
<div class="a" style="left:3px;top:732px;font-size:12px;letter-spacing:1.11px;color:#2e2e46;white-space:nowrap">(0.496, -0.715, 1.142)</div>
<div class="a" style="left:260px;top:731px;width:31px;height:16px;border-top:1px solid #9a9a9a;border-left:1px solid #9a9a9a;border-bottom:1px solid #fff;border-right:1px solid #fff"></div>
<div class="a" style="left:294px;top:731px;width:34px;height:16px;border-top:1px solid #9a9a9a;border-left:1px solid #9a9a9a;border-bottom:1px solid #fff;border-right:1px solid #fff"></div>
<div class="a" style="left:332px;top:731px;width:43px;height:16px;border-top:1px solid #9a9a9a;border-left:1px solid #9a9a9a;border-bottom:1px solid #fff;border-right:1px solid #fff"></div>
<div class="a" style="left:379px;top:731px;width:32px;height:16px;border-top:1px solid #9a9a9a;border-left:1px solid #9a9a9a;border-bottom:1px solid #fff;border-right:1px solid #fff"></div>
<div class="a" style="left:263px;top:733px;font-size:11px;color:#2e2e46;white-space:nowrap;letter-spacing:-0.5px">AXIS</div>
<div class="a" style="left:297px;top:733px;font-size:11px;color:#2e2e46;white-space:nowrap;letter-spacing:-0.2px">GRID</div>
<div class="a" style="left:335px;top:733px;font-size:11px;color:#2e2e46;white-space:nowrap;letter-spacing:-0.2px">EQUAL</div>
<div class="a" style="left:382px;top:733px;font-size:11px;color:#2e2e46;white-space:nowrap;letter-spacing:-0.6px">CSYS</div>
<div class="a" style="left:0;top:749px;width:1280px;height:1px;background:#8a7a6a"></div>


</body></html>
